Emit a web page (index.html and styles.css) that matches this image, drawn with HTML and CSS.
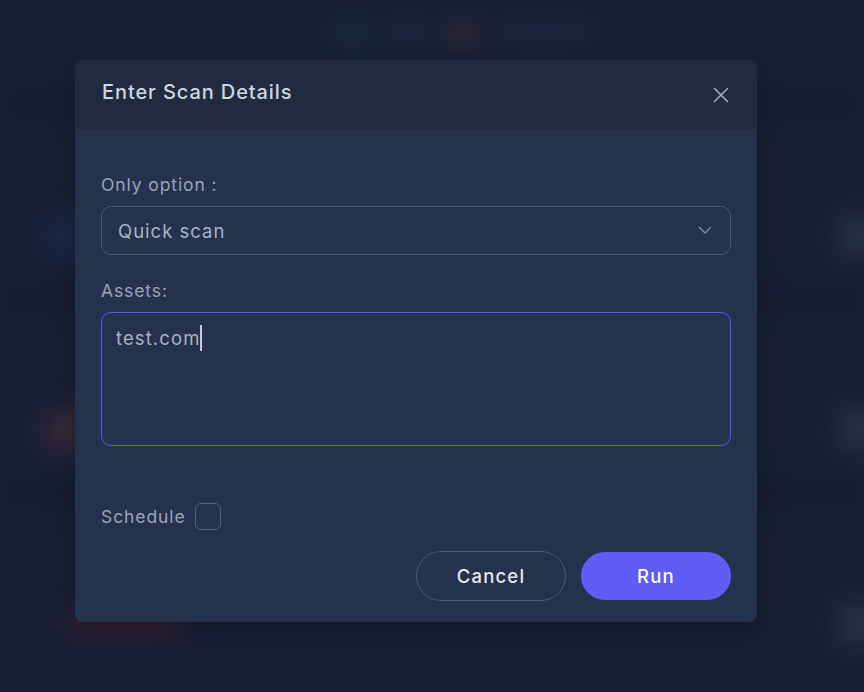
FILE: index.html
```html
<!DOCTYPE html>
<html lang="en">
<head>
<meta charset="utf-8">
<title>Enter Scan Details</title>
<link rel="stylesheet" href="styles.css">
</head>
<body>
<div class="dashboard">
  <div class="topbar">
    <span class="dot dot-green"></span>
    <span class="pill pill-short"></span>
    <span class="dot dot-orange"></span>
    <span class="pill pill-long"></span>
  </div>
  <div class="band"></div>
  <div class="row">
    <span class="blob blob-blue"></span>
    <span class="blob blob-grey"></span>
  </div>
  <div class="band"></div>
  <div class="row">
    <span class="blob blob-orange"></span>
    <span class="blob blob-grey"></span>
  </div>
  <div class="band"></div>
  <div class="row">
    <span class="blob blob-red"></span>
    <span class="blob blob-grey"></span>
  </div>
</div>

<div class="overlay">
  <div class="modal" role="dialog" aria-labelledby="modal-title">
    <div class="modal-header">
      <h2 id="modal-title" class="modal-title">Enter Scan Details</h2>
      <button class="close-btn" aria-label="Close">
        <svg width="16" height="16" viewBox="0 0 16 16" fill="none" stroke="currentColor" stroke-width="1.5" stroke-linecap="round"><path d="M1.5 1.5L14.5 14.5M14.5 1.5L1.5 14.5"/></svg>
      </button>
    </div>
    <div class="modal-body">
      <label class="field-label">Only option :</label>
      <div class="select">
        <span class="select-value">Quick scan</span>
        <svg class="chevron" width="14" height="9" viewBox="0 0 14 9" fill="none" stroke="currentColor" stroke-width="1.4" stroke-linecap="round" stroke-linejoin="round"><path d="M1.5 1.5L7 7L12.5 1.5"/></svg>
      </div>
      <label class="field-label field-label-2">Assets:</label>
      <div class="textarea"><span class="textarea-text">test.com</span><span class="caret"></span></div>
      <div class="schedule">
        <span class="schedule-label">Schedule</span>
        <span class="checkbox"></span>
      </div>
      <div class="actions">
        <button class="btn btn-cancel">Cancel</button>
        <button class="btn btn-run">Run</button>
      </div>
    </div>
  </div>
</div>
</body>
</html>
```

FILE: styles.css
```css
* { box-sizing: border-box; }
html, body {
  margin: 0;
  height: 100%;
}
body {
  background: #19223b;
  font-family: Inter, "Noto Sans", sans-serif;
  overflow: hidden;
  position: relative;
}

/* blurred dashboard behind the modal */
.dashboard {
  filter: blur(13px);
  display: flex;
  flex-direction: column;
  height: 100%;
}
.topbar {
  height: 95px;
  display: flex;
  align-items: center;
  justify-content: center;
  gap: 20px;
  padding: 0 0 26px 70px;
}
.dot {
  width: 22px;
  height: 22px;
  border-radius: 50%;
}
.dot-green { background: #1c4a48; }
.dot-orange { background: #6a3a2c; }
.pill {
  height: 18px;
  border-radius: 9px;
  background: #27304a;
}
.pill-short { width: 50px; }
.pill-long { width: 100px; }
.band {
  height: 18px;
  background: #151c2d;
  flex-shrink: 0;
}
.row {
  height: 176px;
  display: flex;
  justify-content: space-between;
  align-items: center;
  padding: 70px 0 0 45px;
}
.blob {
  width: 50px;
  height: 44px;
  border-radius: 12px;
}
.blob-blue { background: #242f52; }
.blob-orange { background: #4a3038; }
.blob-red { background: #4a2633; width: 120px; height: 26px; margin-left: 20px; }
.blob-grey { background: #2f3a50; width: 40px; margin-right: -14px; }

.overlay {
  position: absolute;
  inset: 0;
  background: rgba(20, 27, 45, 0.3);
  padding: 60px 0 0 75px;
}

.modal {
  width: 682px;
  border-radius: 8px;
  overflow: hidden;
  background: #25324d;
  box-shadow: 0 10px 30px rgba(0, 0, 0, 0.25);
}
.modal-header {
  height: 69px;
  background: #212a3e;
  display: flex;
  align-items: center;
  justify-content: space-between;
  padding: 0 28px 0 27px;
}
.modal-title {
  margin: 0;
  font-size: 20px;
  font-weight: 500;
  color: #ced6e2;
  letter-spacing: 0.9px;
  padding-bottom: 6px;
}
.close-btn {
  background: none;
  border: 0;
  padding: 0;
  color: #a4aec0;
  display: flex;
}

.modal-body {
  padding: 44px 26px 21px 26px;
  display: flex;
  flex-direction: column;
}
.field-label {
  display: block;
  font-size: 17.5px;
  line-height: 24px;
  color: #9aa4b8;
  letter-spacing: 0.9px;
  margin-bottom: 9px;
}
.field-label-2 { margin-top: 24px; }

.select {
  height: 49px;
  border: 1px solid #4a5874;
  border-radius: 10px;
  display: flex;
  align-items: center;
  justify-content: space-between;
  padding: 0 18px 0 16px;
}
.select-value {
  font-size: 18.5px;
  letter-spacing: 1px;
  color: #a9b3c5;
}
.chevron { color: #7f8aa0; }

.textarea {
  height: 134px;
  border: 1px solid #5a58ea;
  border-radius: 10px;
  padding: 12px 14px;
  display: flex;
  align-items: flex-start;
}
.textarea-text {
  font-size: 18.5px;
  line-height: 27px;
  letter-spacing: 1.1px;
  color: #a9b3c5;
}
.caret {
  width: 2px;
  height: 26px;
  background: #c3cad6;
  margin-left: 0;
}

.schedule {
  margin-top: 57px;
  display: flex;
  align-items: center;
  gap: 10px;
}
.schedule-label {
  font-size: 17.5px;
  letter-spacing: 0.9px;
  color: #9aa4b8;
}
.checkbox {
  width: 26px;
  height: 27px;
  border: 1px solid #56637c;
  border-radius: 6px;
}

.actions {
  margin-top: 21px;
  display: flex;
  justify-content: flex-end;
  gap: 15px;
}
.btn {
  width: 150px;
  height: 50px;
  border-radius: 25px;
  font-family: Inter, "Noto Sans", sans-serif;
  font-size: 18.5px;
  font-weight: 500;
  letter-spacing: 1.2px;
  cursor: pointer;
}
.btn-cancel {
  background: transparent;
  border: 1px solid #4b5874;
  color: #e4e8ef;
}
.btn-run {
  background: #5e5cf2;
  border: 0;
  color: #ffffff;
  height: 48px;
  margin-top: 1px;
}
```
